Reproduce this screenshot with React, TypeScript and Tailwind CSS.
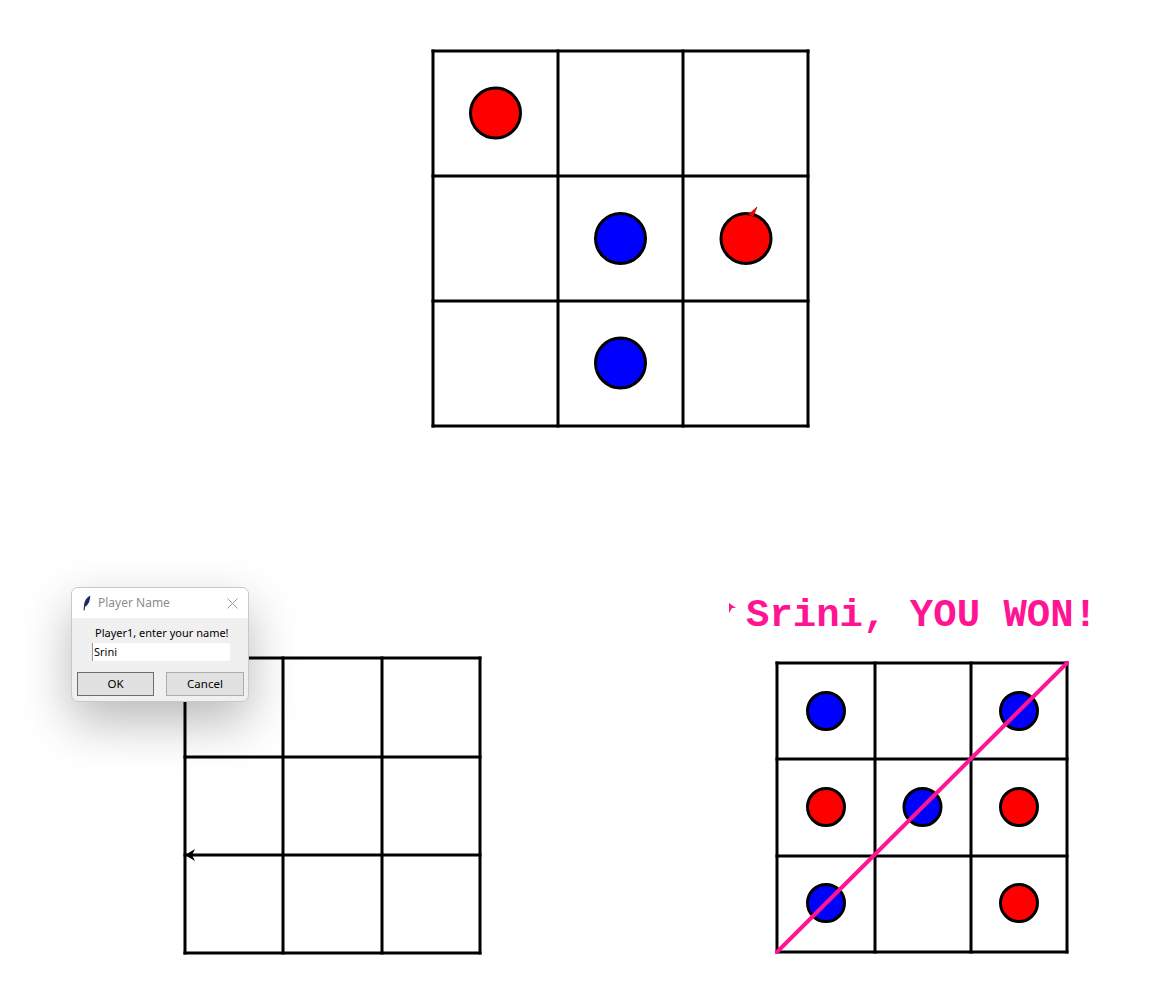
import React from "react";

type Disc = { x: number; y: number; color: string };

const TOP_DISCS: Disc[] = [
  { x: 65.5, y: 65, color: "#ff0000" },
  { x: 190.5, y: 190.5, color: "#0000ff" },
  { x: 316, y: 190.5, color: "#ff0000" },
  { x: 190.5, y: 315, color: "#0000ff" },
];

const WIN_DISCS: Disc[] = [
  { x: 52, y: 51, color: "#0000ff" },
  { x: 245, y: 51, color: "#0000ff" },
  { x: 52, y: 147, color: "#ff0000" },
  { x: 148.5, y: 147, color: "#0000ff" },
  { x: 245, y: 147, color: "#ff0000" },
  { x: 52, y: 243, color: "#0000ff" },
  { x: 245, y: 243, color: "#ff0000" },
];

// draws the 3x3 board lines, xs/ys are line centres inside the svg
function Grid({ xs, ys }: { xs: number[]; ys: number[] }) {
  const x0 = xs[0];
  const x1 = xs[xs.length - 1];
  const y0 = ys[0];
  const y1 = ys[ys.length - 1];
  return (
    <g stroke="#000" strokeWidth={3} strokeLinecap="square">
      {xs.map((x) => (
        <line key={"v" + x} x1={x} y1={y0} x2={x} y2={y1} />
      ))}
      {ys.map((y) => (
        <line key={"h" + y} x1={x0} y1={y} x2={x1} y2={y} />
      ))}
    </g>
  );
}

function Discs({ items, r }: { items: Disc[]; r: number }) {
  return (
    <g stroke="#000" strokeWidth={3}>
      {items.map((d, i) => (
        <circle key={i} cx={d.x} cy={d.y} r={r} fill={d.color} />
      ))}
    </g>
  );
}

function NameDialog() {
  return (
    <div className="absolute left-[71px] top-[7px] w-[178px] h-[115px] rounded-[7px] border border-[#c8c8c8] bg-[#f0f0f0] overflow-hidden shadow-[0_20px_50px_rgba(0,0,0,0.28)] font-['Noto_Sans',sans-serif]">
      {/* title bar */}
      <div className="flex h-[30px] items-center bg-white pl-[11px] pr-[10px]">
        <svg width="8" height="16" viewBox="0 0 8 16">
          <path d="M7.2 0.6 C4.2 2 1.6 5.6 1 10.2 L0.6 15.4 L1.6 15.4 L2.2 11.6 C5.2 10.4 7.4 5.6 7.2 0.6 Z" fill="#1d2a5a" />
        </svg>
        <span className="ml-[7px] text-[12px] leading-none text-[#8c8c8c]">Player Name</span>
        <svg className="ml-auto" width="11" height="11" viewBox="0 0 11 11">
          <path d="M0.5 0.5 L10.5 10.5 M10.5 0.5 L0.5 10.5" stroke="#9a9a9a" strokeWidth="1" />
        </svg>
      </div>
      {/* body */}
      <div className="flex flex-col px-[4px]">
        <div className="mt-[7px] pl-[19px] text-[11px] leading-[16px] text-black">Player1, enter your name!</div>
        <div className="ml-[16px] mt-[2px] h-[18px] w-[138px] border-l border-[#9a9a9a] bg-white pl-[1px] text-[11px] leading-[18px] text-black">
          Srini
        </div>
        <div className="mt-[11px] flex gap-[12px] pl-[1px]">
          <button className="h-[24px] w-[77px] border border-[#6e6e6e] bg-[#e1e1e1] text-[11.5px] text-black">OK</button>
          <button className="h-[24px] w-[78px] border border-[#adadad] bg-[#e1e1e1] text-[11.5px] text-black">Cancel</button>
        </div>
      </div>
    </div>
  );
}

export default function App() {
  return (
    <div className="w-[1162px] h-[999px] bg-white overflow-hidden">
      {/* game in progress */}
      <div className="pt-[48px] pl-[430px]">
        <svg width="381" height="381" viewBox="0 0 381 381">
          <Grid xs={[3, 128, 253, 378]} ys={[3, 128, 253, 378]} />
          <Discs items={TOP_DISCS} r={25} />
          <polygon points="318,167 327,159 323,169 320,167" fill="#ff0000" stroke="#8b0000" strokeWidth="0.6" />
        </svg>
      </div>

      <div className="mt-[151px] flex">
        {/* name prompt */}
        <div className="relative w-[720px] h-[419px]">
          <div className="pl-[182px] pt-[75px]">
            <svg width="301" height="301" viewBox="0 0 301 301">
              <Grid xs={[3, 101, 200, 298]} ys={[3, 102, 200, 298]} />
              <polygon points="3,200 13,194 10,200 13,206" fill="#000" />
            </svg>
          </div>
          <NameDialog />
        </div>

        {/* winner */}
        <div className="flex flex-col">
          <div className="mt-[17px] flex items-start">
            <svg className="ml-[7px] mt-[6px]" width="10" height="12" viewBox="0 0 10 12">
              <polygon points="2,0 9,5 5,5 2,10" fill="#ff1493" />
            </svg>
            <span className="ml-[9px] font-['Liberation_Mono',monospace] text-[39px] font-bold leading-[39px] text-[#ff1493] whitespace-pre">
              Srini, YOU WON!
            </span>
          </div>
          <div className="ml-[54px] mt-[24px]">
            <svg width="296" height="296" viewBox="0 0 296 296">
              <Grid xs={[3, 101, 197, 293]} ys={[3, 99, 196, 292]} />
              <Discs items={WIN_DISCS} r={18.5} />
              <line x1="3" y1="292" x2="293" y2="3" stroke="#ff1493" strokeWidth="4" strokeLinecap="round" />
            </svg>
          </div>
        </div>
      </div>
    </div>
  );
}
